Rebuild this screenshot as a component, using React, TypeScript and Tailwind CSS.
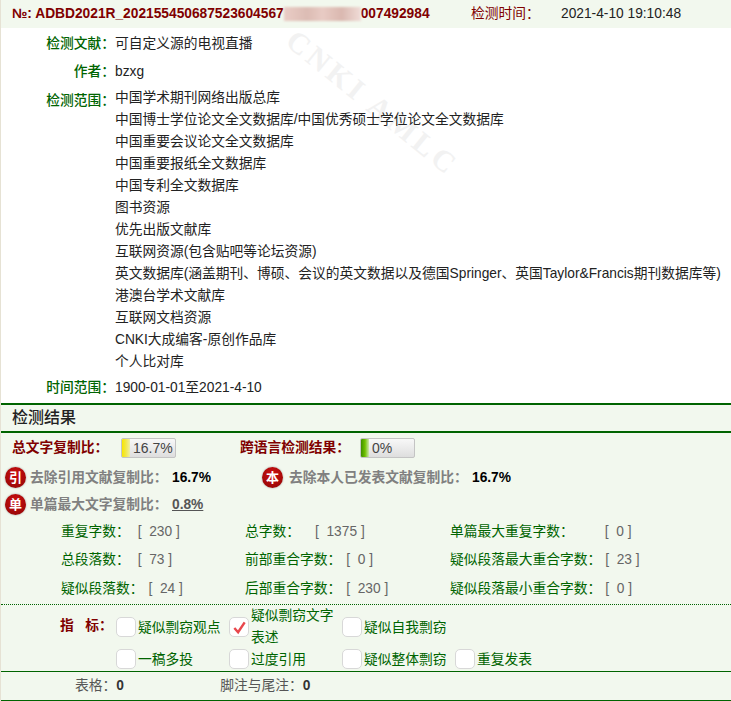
import React from 'react'

const scopes = [
  '中国学术期刊网络出版总库',
  '中国博士学位论文全文数据库/中国优秀硕士学位论文全文数据库',
  '中国重要会议论文全文数据库',
  '中国重要报纸全文数据库',
  '中国专利全文数据库',
  '图书资源',
  '优先出版文献库',
  '互联网资源(包含贴吧等论坛资源)',
  '英文数据库(涵盖期刊、博硕、会议的英文数据以及德国Springer、英国Taylor&Francis期刊数据库等)',
  '港澳台学术文献库',
  '互联网文档资源',
  'CNKI大成编客-原创作品库',
  '个人比对库',
]

// label, value, gap class for each of the three columns
const stats = [
  ['重复字数：', '[  230 ]', 'ml-[8px]', '总字数：', '[  1375 ]', 'ml-[15px]', '单篇最大重复字数：', '[  0 ]', 'ml-[31px]'],
  ['总段落数：', '[  73 ]', 'ml-[8px]', '前部重合字数：', '[  0 ]', 'ml-[5px]', '疑似段落最大重合字数：', '[  23 ]', 'ml-[4px]'],
  ['疑似段落数：', '[  24 ]', 'ml-[5px]', '后部重合字数：', '[  230 ]', 'ml-[5px]', '疑似段落最小重合字数：', '[  0 ]', 'ml-[4px]'],
]

function RedBadge({ char }: { char: string }) {
  return (
    <span className="flex h-[21px] w-[21px] shrink-0 items-center justify-center rounded-full bg-[radial-gradient(circle_at_50%_35%,#d01010,#a00808_70%,#8a0606)] text-[13px] font-bold leading-none text-white shadow-[0_0_2px_#999]">
      {char}
    </span>
  )
}

function Check({ label, checked }: { label: string; checked?: boolean }) {
  return (
    <div className="flex w-[113px] items-center">
      <span className="mr-[2px] flex h-[20px] w-[20px] shrink-0 items-center justify-center rounded-[5px] border border-[#d8d8d8] bg-white">
        {checked && (
          <svg viewBox="0 0 16 16" className="h-[15px] w-[15px]">
            <path d="M2.5 8.5 L6.5 13 L13.5 2.5" fill="none" stroke="#e8474c" strokeWidth="2.6" />
          </svg>
        )}
      </span>
      <span className={checked ? 'w-[91px] leading-[22px] text-[#006400]' : 'w-[91px] pt-[2px] leading-[22px] text-[#006400]'}>
        {label}
      </span>
    </div>
  )
}

export default function App() {
  return (
    <div className="relative h-[701px] w-[731px] overflow-hidden border-l border-[#e6e2d4] bg-white font-['Liberation_Sans','Noto_Sans_CJK_SC',sans-serif] text-[13.75px] text-[#222]">
      {/* header */}
      <div className="flex h-[28px] items-center bg-[#f2f8ee] pl-[11px]">
        <span className="flex w-[459px] items-center whitespace-nowrap font-bold text-[#800000]">
          <span>№: ADBD2021R_202155450687523604567</span>
          <span className="h-[14px] w-[77px] bg-[linear-gradient(90deg,#eacdc6,#dcbcb4_30%,#e8cbc4_50%,#dab8b0_75%,#f0dcd8)] blur-[1px]"></span>
          <span>007492984</span>
        </span>
        <span className="w-[90px] text-[#800000]">检测时间：</span>
        <span>2021-4-10 19:10:48</span>
      </div>

      {/* watermark */}
      <div className="pointer-events-none absolute left-[266px] top-[80px] rotate-[39deg] whitespace-nowrap font-['Liberation_Serif',serif] text-[30px] font-bold tracking-[4px] text-[#f2f2f2]">
        CNKI AMLC
      </div>

      {/* info */}
      <div className="relative flex flex-col pt-[5px]">
        <div className="flex h-[22px] items-center">
          <span className="w-[114px] text-right font-medium text-[#006400]">检测文献：</span>
          <span>可自定义源的电视直播</span>
        </div>
        <div className="mt-[6px] flex h-[22px] items-center">
          <span className="w-[114px] text-right font-medium text-[#006400]">作者：</span>
          <span>bzxg</span>
        </div>
        <div className="mt-[4px] flex">
          <span className="w-[114px] pt-[3px] text-right font-medium leading-[22px] text-[#006400]">检测范围：</span>
          <div className="flex flex-col">
            {scopes.map(s => (
              <div key={s} className="h-[22px] whitespace-nowrap leading-[22px]">{s}</div>
            ))}
          </div>
        </div>
        <div className="mt-[4px] flex h-[22px] items-center">
          <span className="w-[114px] text-right font-medium text-[#006400]">时间范围：</span>
          <span>1900-01-01至2021-4-10</span>
        </div>
      </div>

      {/* result */}
      <div className="mt-[4px] h-[298px] bg-[#f2f8ee]">
        <div className="flex h-[30px] items-center border-y-2 border-[#006400] pl-[11px] text-[16px] font-medium leading-none text-[#222]">
          检测结果
        </div>

        <div className="flex h-[30px] items-center pl-[11px]">
          <span className="w-[109px] font-bold text-[#800000]">总文字复制比：</span>
          <span className="flex h-[20px] w-[55px] items-center overflow-hidden rounded-[2px] border border-[#c4c4c4] bg-[linear-gradient(180deg,#f8f8f8,#dedede)] text-[#444]">
            <span className="h-full w-[8px] bg-[linear-gradient(90deg,#f7e600,#f2e84a,#eeeeaa)]"></span>
            <span className="pl-[3px] text-[14px] leading-none">16.7%</span>
          </span>
          <span className="ml-[64px] w-[120px] font-bold text-[#800000]">跨语言检测结果：</span>
          <span className="flex h-[20px] w-[55px] items-center overflow-hidden rounded-[2px] border border-[#c4c4c4] bg-[linear-gradient(180deg,#f8f8f8,#dedede)] text-[#444]">
            <span className="h-full w-[8px] bg-[linear-gradient(90deg,#3f8f00,#6fc000,#cfe8b0)]"></span>
            <span className="pl-[3px] text-[14px] leading-none">0%</span>
          </span>
        </div>

        <div className="mt-[2px] flex h-[24px] items-center pl-[4px]">
          <RedBadge char="引" />
          <span className="ml-[4px] w-[142px] whitespace-nowrap pt-[2px] font-bold text-[#808080]">去除引用文献复制比：</span>
          <span className="w-[90px] pt-[2px] font-bold text-black">16.7%</span>
          <RedBadge char="本" />
          <span className="ml-[6px] w-[183px] whitespace-nowrap pt-[2px] font-bold text-[#808080]">去除本人已发表文献复制比：</span>
          <span className="pt-[2px] font-bold text-black">16.7%</span>
        </div>
        <div className="mt-[3px] flex h-[24px] items-center pl-[4px]">
          <RedBadge char="单" />
          <span className="ml-[4px] w-[142px] whitespace-nowrap pt-[2px] font-bold text-[#808080]">单篇最大文字复制比：</span>
          <span className="pt-[2px] font-bold text-[#555] underline">0.8%</span>
        </div>

        <div className="mt-[2px] grid grid-cols-[184px_205px_auto] pl-[60px]">
          {stats.map(row =>
            [0, 3, 6].map(i => (
              <div key={row[i]} className="flex h-[28.5px] items-center whitespace-pre">
                <span className="text-[#006400]">{row[i]}</span>
                <span className={`${row[i + 2]} text-[#666]`}>{row[i + 1]}</span>
              </div>
            ))
          )}
        </div>

        <div className="mt-[0.5px] border-t border-dotted border-[#006400] pl-[59px]">
          <div className="flex">
            <span className="w-[56px] pt-[11px] font-bold text-[#800000]">指&nbsp;&nbsp;&nbsp;标：</span>
            <div className="flex flex-col">
              <div className="flex h-[44px] items-center">
                <Check label="疑似剽窃观点" />
                <Check label="疑似剽窃文字表述" checked />
                <Check label="疑似自我剽窃" />
              </div>
              <div className="-mt-[1px] flex h-[22px] items-center">
                <Check label="一稿多投" />
                <Check label="过度引用" />
                <Check label="疑似整体剽窃" />
                <Check label="重复发表" />
              </div>
            </div>
          </div>
        </div>

        <div className="mt-[1px] flex h-[30px] items-center border-y border-[#006400] pl-[74px]">
          <span className="text-[#555]">表格：</span>
          <span className="w-[104px] font-bold text-[#333]">0</span>
          <span className="text-[#555]">脚注与尾注：</span>
          <span className="font-bold text-[#333]">0</span>
        </div>
      </div>
    </div>
  )
}
